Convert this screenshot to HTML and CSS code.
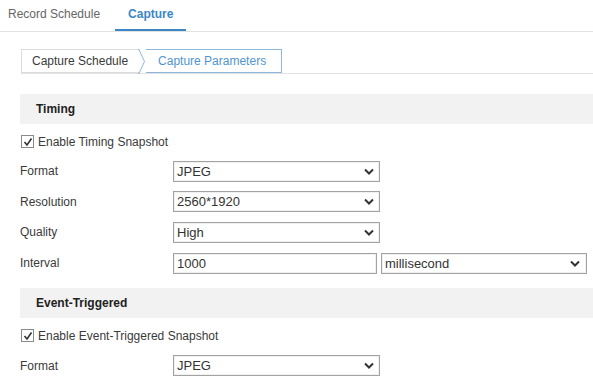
FILE: index.html
```html
<!DOCTYPE html>
<html lang="en">
<head>
    <meta charset="utf-8">
    <title>Capture Parameters</title>
    <link rel="stylesheet" href="styles.css">
</head>
<body>
    <div class="tab-bar">
        <div class="tab">Record Schedule</div>
        <div class="tab active">Capture</div>
    </div>

    <div class="steps">
        <div class="step">Capture Schedule</div>
        <svg class="step-arrow" width="8" height="25" viewBox="0 0 8 25">
            <polyline points="0,0.5 1,0.5 6.5,12.5 1,24.5 0,24.5" fill="none" stroke="#8bb7da" stroke-width="1"/>
        </svg>
        <div class="step current">Capture Parameters</div>
    </div>

    <div class="section">
        <div class="section-title">Timing</div>
        <label class="check-row">
            <span class="checkbox">
                <svg width="10" height="10" viewBox="0 0 10 10"><polyline points="1.5,5 4,8 8.5,1.5" fill="none" stroke="#333" stroke-width="1.6"/></svg>
            </span>
            Enable Timing Snapshot
        </label>
        <div class="form-row">
            <span class="form-label">Format</span>
            <div class="select"><span>JPEG</span><svg width="10" height="7" viewBox="0 0 10 7"><polyline points="1,1.5 5,5.5 9,1.5" fill="none" stroke="#333" stroke-width="2"/></svg></div>
        </div>
        <div class="form-row">
            <span class="form-label">Resolution</span>
            <div class="select"><span>2560*1920</span><svg width="10" height="7" viewBox="0 0 10 7"><polyline points="1,1.5 5,5.5 9,1.5" fill="none" stroke="#333" stroke-width="2"/></svg></div>
        </div>
        <div class="form-row">
            <span class="form-label">Quality</span>
            <div class="select"><span>High</span><svg width="10" height="7" viewBox="0 0 10 7"><polyline points="1,1.5 5,5.5 9,1.5" fill="none" stroke="#333" stroke-width="2"/></svg></div>
        </div>
        <div class="form-row">
            <span class="form-label">Interval</span>
            <div class="text-input">1000</div>
            <div class="select wide"><span>millisecond</span><svg width="10" height="7" viewBox="0 0 10 7"><polyline points="1,1.5 5,5.5 9,1.5" fill="none" stroke="#333" stroke-width="2"/></svg></div>
        </div>
    </div>

    <div class="section event">
        <div class="section-title">Event-Triggered</div>
        <label class="check-row">
            <span class="checkbox">
                <svg width="10" height="10" viewBox="0 0 10 10"><polyline points="1.5,5 4,8 8.5,1.5" fill="none" stroke="#333" stroke-width="1.6"/></svg>
            </span>
            Enable Event-Triggered Snapshot
        </label>
        <div class="form-row">
            <span class="form-label">Format</span>
            <div class="select"><span>JPEG</span><svg width="10" height="7" viewBox="0 0 10 7"><polyline points="1,1.5 5,5.5 9,1.5" fill="none" stroke="#333" stroke-width="2"/></svg></div>
        </div>
    </div>
</body>
</html>
```

FILE: styles.css
```css
* {
    margin: 0;
    padding: 0;
    box-sizing: border-box;
}

body {
    font-family: "Liberation Sans", Arial, sans-serif;
    font-size: 12px;
    color: #3a3a3a;
    background: white;
    overflow: hidden;
}

.tab-bar {
    display: flex;
    height: 32px;
    padding-left: 8px;
    border-bottom: 1px solid #e2e2e2;
}

.tab {
    line-height: 28px;
    color: #666;
}

.tab.active {
    margin-left: 15px;
    padding: 0 13px;
    color: #3b87c6;
    font-weight: bold;
    border-bottom: 2px solid #3b87c6;
    height: 31px;
}

.steps {
    display: flex;
    margin: 17px 0 0 21px;
    height: 25px;
    border-bottom: 1px solid #e2e2e2;
}

.step {
    line-height: 23px;
    padding: 0 11px 0 10px;
    border: 1px solid #dcdcdc;
    border-right: none;
    background: white;
}

.step-arrow {
    display: block;
    flex-shrink: 0;
    margin-left: -1px;
}

.step.current {
    color: #4f95cf;
    border: 1px solid #8bb7da;
    border-left: none;
    padding: 0 15px 0 12px;
}

.section {
    padding-left: 20px;
}

.section-title {
    margin-top: 20px;
    height: 30px;
    line-height: 30px;
    padding-left: 16px;
    background: #f2f2f2;
    font-weight: bold;
    color: #222;
}

.event .section-title {
    margin-top: 10px;
}

.check-row {
    display: flex;
    align-items: center;
    gap: 4px;
    margin-top: 3px;
    height: 29px;
}

.checkbox {
    display: flex;
    align-items: center;
    justify-content: center;
    width: 13px;
    height: 13px;
    border: 1px solid #8a8a8a;
    background: white;
    margin-left: 1px;
}

.form-row {
    display: flex;
    align-items: center;
    height: 30.6px;
}

.form-label {
    width: 153px;
}

.select, .text-input {
    height: 21px;
    border: 1px solid #a3a3a3;
    box-shadow: inset 0 0 0 1px #f0f0f0;
    background: white;
    padding-left: 3px;
    line-height: 19px;
    font-size: 13px;
    color: #333;
}

.select {
    display: flex;
    align-items: center;
    justify-content: space-between;
    width: 207px;
    padding-right: 5px;
}

.text-input {
    width: 204px;
}

.select.wide {
    margin-left: 4px;
    width: 206px;
    padding-right: 6px;
}
```
